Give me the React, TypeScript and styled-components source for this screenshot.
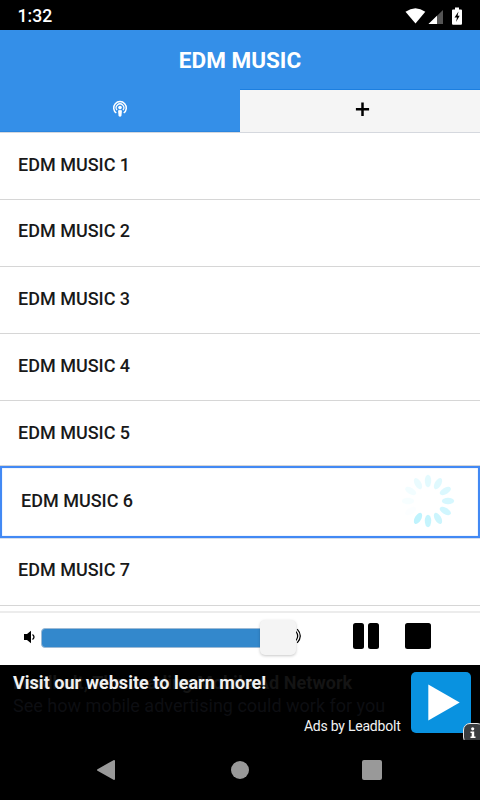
import React from "react";
import styled, { createGlobalStyle } from "styled-components";

const GlobalStyle = createGlobalStyle`
  * { box-sizing: border-box; }
  body { margin: 0; background: #fff; font-family: Roboto, sans-serif; }
  svg { display: block; }
`;

const Screen = styled.div`
  width: 480px;
  height: 800px;
  display: flex;
  flex-direction: column;
  overflow: hidden;
  background: #fff;
`;

const StatusBar = styled.div`
  height: 30px;
  flex: none;
  display: flex;
  align-items: center;
  justify-content: space-between;
  padding: 1px 17px 0 17.5px;
  background: #000;
  color: #fff;
  font-size: 17.6px;
  font-weight: 500;
`;

const StatusIcons = styled.div`
  display: flex;
  align-items: flex-start;
`;

const TitleBar = styled.h1`
  height: 60px;
  flex: none;
  margin: 0;
  display: flex;
  align-items: center;
  justify-content: center;
  background: #348fe8;
  border-bottom: 1px solid #1c7fe0;
  color: #fff;
  font-size: 22.5px;
  font-weight: 700;
`;

const Tabs = styled.div`
  height: 43px;
  flex: none;
  display: grid;
  grid-template-columns: 1fr 1fr;
  border-bottom: 1px solid #d5d8de;
`;

const Tab = styled.div<{ $active?: boolean }>`
  display: flex;
  justify-content: center;
  padding-top: 11px;
  padding-left: ${(p) => (p.$active ? 0 : 5)}px;
  background: ${(p) => (p.$active ? "#348fe8" : "#f5f5f5")};
  margin-top: ${(p) => (p.$active ? -1 : 0)}px;
  border-bottom: ${(p) => (p.$active ? "1px solid #2b86df" : "none")};
`;

const List = styled.div`
  height: 478px;
  flex: none;
  overflow: hidden;
`;

const Row = styled.div<{ $selected?: boolean; $height: number; $lift: number }>`
  height: ${(p) => p.$height}px;
  display: flex;
  align-items: center;
  justify-content: space-between;
  padding: 0 ${(p) => (p.$selected ? 22 : 18)}px ${(p) => p.$lift}px ${(p) => (p.$selected ? 19 : 18)}px;
  border: ${(p) => (p.$selected ? "2px solid #4289f4" : "0 solid #d6d6d6")};
  border-bottom-width: ${(p) => (p.$selected ? 2 : 1)}px;
  box-shadow: ${(p) => (p.$selected ? "inset 0 0 1px #6ba5ff, 0 1px 0 #d8dfeb" : "none")};
  color: #191919;
  font-size: 18px;
  font-weight: 500;
`;

const Player = styled.div`
  height: 54px;
  flex: none;
  display: flex;
  border-top: 2px solid #ececec;
  background: #fff;
`;

const VolumeLow = styled.div`
  width: 41px;
  padding: 17px 0 0 23px;
`;

const Slider = styled.div`
  width: 255px;
  padding-top: 15px;
  position: relative;
`;

const Track = styled.div`
  width: 230px;
  height: 20px;
  border: 1px solid #9dbad5;
  border-radius: 4px;
  background: #3388cc;
`;

const Thumb = styled.div`
  position: absolute;
  left: 219px;
  top: 7px;
  width: 36px;
  height: 35px;
  border-radius: 5px;
  background: #f4f4f4;
  box-shadow: 0 1px 3px rgba(0, 0, 0, 0.22);
`;

const VolumeHigh = styled.div`
  width: 56.5px;
  padding-top: 15px;
`;

const Controls = styled.div`
  display: flex;
  gap: 26px;
  padding-top: 10px;
`;

const PauseButton = styled.div`
  display: flex;
  gap: 4px;
`;

const SolidBlock = styled.div<{ $width: number }>`
  width: ${(p) => p.$width}px;
  height: 26px;
  border-radius: 2.5px;
  background: #000;
`;

const Ad = styled.div`
  height: 75px;
  flex: none;
  position: relative;
  overflow: hidden;
  background: #000;
  display: flex;
  justify-content: space-between;
  padding: 7px 9px 0 13px;
`;

const AdCopy = styled.div`
  width: 387.5px;
  display: flex;
  flex-direction: column;
  white-space: nowrap;
`;

const Headlines = styled.div`
  display: grid;
  height: 22px;
  font-size: 18px;
  line-height: 21px;
  font-weight: 700;
  & > * { grid-area: 1 / 1; }
`;

const OldHeadline = styled.span`
  color: #141414;
  letter-spacing: 0.04px;
`;

const Headline = styled.span`
  color: #f0f0f0;
  letter-spacing: 0.03px;
`;

const AdDetail = styled.div`
  height: 23px;
  line-height: 23px;
  color: #0d0e12;
  font-size: 18px;
`;

const AdCredit = styled.div`
  align-self: flex-end;
  line-height: 18px;
  color: #f2f2f2;
  font-size: 14px;
  letter-spacing: -0.22px;
`;

const AdBadge = styled.div`
  position: absolute;
  right: -4px;
  bottom: -4px;
  width: 21px;
  height: 21px;
  padding: 3px 0 0 5px;
  border: 1.5px solid #e8e8e8;
  border-radius: 7px;
  background: #3a3d40;
`;

const NavBar = styled.div`
  height: 60px;
  flex: none;
  display: grid;
  grid-template-columns: 134px 131px 20px;
  align-items: center;
  padding-left: 97px;
  background: #000;
`;

const petals = [0.44, 0.5, 0.56, 0.64, 0.74, 0.8, 0.9, 1, 0.05, 0.12, 0.2, 0.32];

const Spinner = () => (
  <svg width="56" height="56" viewBox="-28 -28 56 56">
    {petals.map((opacity, i) => (
      <ellipse
        key={i}
        cx="0"
        cy="-20"
        rx="3.2"
        ry="6.2"
        fill="#bff3fd"
        opacity={opacity}
        transform={`rotate(${i * 30})`}
      />
    ))}
  </svg>
);

const PodcastIcon = () => (
  <svg width="16" height="18" viewBox="0 0 16 18" fill="none" stroke="#fff">
    <path d="M4.3 13A6.3 6.3 0 1 1 11.7 13" strokeWidth="1.5" />
    <path d="M5.1 10.2A3.8 3.8 0 1 1 10.9 10.2" strokeWidth="1.2" />
    <circle cx="8" cy="7.6" r="1.8" fill="#fff" stroke="none" />
    <path d="M6 10.6Q8 9.5 10 10.6L9.4 16Q8 17.6 6.6 16Z" fill="#fff" stroke="none" />
  </svg>
);

const tracks = [
  { title: "EDM MUSIC 1", height: 67, lift: 3 },
  { title: "EDM MUSIC 2", height: 67, lift: 5 },
  { title: "EDM MUSIC 3", height: 67, lift: 3 },
  { title: "EDM MUSIC 4", height: 67, lift: 3 },
  { title: "EDM MUSIC 5", height: 65, lift: 2 },
  { title: "EDM MUSIC 6", height: 72, lift: 3, playing: true },
  { title: "EDM MUSIC 7", height: 68, lift: 4 },
];

export default function App() {
  return (
    <>
      <GlobalStyle />
      <Screen>
        <StatusBar>
          <span>1:32</span>
          <StatusIcons>
            <svg width="58" height="18" viewBox="405 6 58 18">
              <path d="M405.5 10.8Q415.5 3.6 425.3 10.8L415.5 22.4Z" fill="#fff" />
              <path d="M443 9V23H428.5Z" fill="#555" />
              <path d="M437 14.8V23H428.5Z" fill="#fff" />
              <path d="M455 6.5h4v2h2q1 0 1 1v13q0 1.2-1 1.2h-8q-1 0-1-1.2v-13q0-1 1-1h2Z" fill="#fff" />
              <path d="M458.5 10.5L454.5 16.5H457L456 21L459.7 14.8H457.6Z" fill="#000" />
            </svg>
          </StatusIcons>
        </StatusBar>
        <TitleBar>EDM MUSIC</TitleBar>
        <Tabs>
          <Tab $active>
            <PodcastIcon />
          </Tab>
          <Tab>
            <svg width="16" height="16" viewBox="0 0 16 16">
              <path d="M7.5 1.6v13.4M.9 8.3h13.2" stroke="#000" strokeWidth="2.5" />
            </svg>
          </Tab>
        </Tabs>
        <List>
          {tracks.map((t) => (
            <Row key={t.title} $height={t.height} $lift={t.lift} $selected={t.playing}>
              <span>{t.title}</span>
              {t.playing && <Spinner />}
            </Row>
          ))}
        </List>
        <Player>
          <VolumeLow>
            <svg width="14" height="14" viewBox="0 0 14 14">
              <path d="M1 4h3l4-3.2v12.4L4 10H1Z" fill="#000" />
              <path d="M9.5 4.5q3 2.3 0 5" fill="none" stroke="#000" strokeWidth="1.3" />
            </svg>
          </VolumeLow>
          <Slider>
            <Track />
            <Thumb />
          </Slider>
          <VolumeHigh>
            <svg width="6" height="17" viewBox="0 0 6 17" fill="none" stroke="#000" strokeWidth="1.2">
              <path d="M0 3.5Q3.4 8 0 12.5M1.2 1.2Q7.4 8 1.2 14.8" />
            </svg>
          </VolumeHigh>
          <Controls>
            <PauseButton>
              <SolidBlock $width={11} />
              <SolidBlock $width={11} />
            </PauseButton>
            <SolidBlock $width={26} />
          </Controls>
        </Player>
        <Ad>
          <AdCopy>
            <Headlines>
              <OldHeadline>Leadbolt, The Leading Mobile Ad Network</OldHeadline>
              <Headline>Visit our website to learn more!</Headline>
            </Headlines>
            <AdDetail>See how mobile advertising could work for you</AdDetail>
            <AdCredit>Ads by Leadbolt</AdCredit>
          </AdCopy>
          <svg width="60" height="61" viewBox="0 0 60 61">
            <rect width="60" height="61" rx="5" fill="#0992e0" />
            <path d="M17.3 12.5V48.5L48.7 30.5Z" fill="#fff" />
          </svg>
          <AdBadge>
            <svg width="8" height="12" viewBox="0 0 8 12" fill="#fff">
              <circle cx="3.7" cy="1.8" r="1.6" />
              <path d="M1.5 4.5h3.7v5H6.5v1.6h-5V9.5h1.2V6H1.5Z" />
            </svg>
          </AdBadge>
        </Ad>
        <NavBar>
          <svg width="18" height="20" viewBox="0 0 18 20">
            <path d="M17 1V19L1 10Z" fill="#999" stroke="#999" strokeWidth="2" strokeLinejoin="round" />
          </svg>
          <svg width="18" height="18" viewBox="0 0 18 18">
            <circle cx="9" cy="9" r="9" fill="#999" />
          </svg>
          <svg width="20" height="20" viewBox="0 0 20 20">
            <rect width="20" height="20" rx="2" fill="#999" />
          </svg>
        </NavBar>
      </Screen>
    </>
  );
}
